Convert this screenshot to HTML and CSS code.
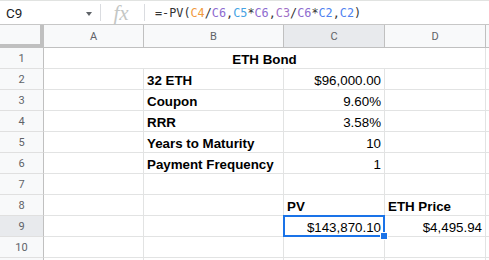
FILE: index.html
```html
<!DOCTYPE html>
<html lang="en">
<head>
    <meta charset="UTF-8">
    <meta name="viewport" content="width=device-width, initial-scale=1.0">
    <title>ETH Bond</title>
    <link rel="stylesheet" href="styles.css">
</head>
<body>
    <div class="formula-bar">
        <div class="name-box">
            <span class="cell-ref">C9</span>
            <span class="dropdown"></span>
        </div>
        <div class="sep"></div>
        <div class="fx">fx</div>
        <div class="sep"></div>
        <div class="formula">=-PV(<span class="r-orange">C4</span>/<span class="r-purple">C6</span>,<span class="r-sky">C5</span>*<span class="r-purple">C6</span>,<span class="r-violet">C3</span>/<span class="r-purple">C6</span>*<span class="r-blue">C2</span>,<span class="r-blue">C2</span>)</div>
    </div>

    <div class="sheet">
        <div class="corner"></div>
        <div class="col-head">A</div>
        <div class="col-head">B</div>
        <div class="col-head active">C</div>
        <div class="col-head">D</div>
        <div class="col-head last"></div>

        <div class="row-head">1</div>
        <div class="cell bold center span4">ETH Bond</div>
        <div class="cell last"></div>

        <div class="row-head">2</div>
        <div class="cell"></div>
        <div class="cell bold">32 ETH</div>
        <div class="cell num">$96,000.00</div>
        <div class="cell"></div>
        <div class="cell last"></div>

        <div class="row-head">3</div>
        <div class="cell"></div>
        <div class="cell bold">Coupon</div>
        <div class="cell num">9.60%</div>
        <div class="cell"></div>
        <div class="cell last"></div>

        <div class="row-head">4</div>
        <div class="cell"></div>
        <div class="cell bold">RRR</div>
        <div class="cell num">3.58%</div>
        <div class="cell"></div>
        <div class="cell last"></div>

        <div class="row-head">5</div>
        <div class="cell"></div>
        <div class="cell bold">Years to Maturity</div>
        <div class="cell num">10</div>
        <div class="cell"></div>
        <div class="cell last"></div>

        <div class="row-head">6</div>
        <div class="cell"></div>
        <div class="cell bold">Payment Frequency</div>
        <div class="cell num">1</div>
        <div class="cell"></div>
        <div class="cell last"></div>

        <div class="row-head">7</div>
        <div class="cell"></div>
        <div class="cell"></div>
        <div class="cell"></div>
        <div class="cell"></div>
        <div class="cell last"></div>

        <div class="row-head">8</div>
        <div class="cell"></div>
        <div class="cell"></div>
        <div class="cell bold">PV</div>
        <div class="cell bold">ETH Price</div>
        <div class="cell last"></div>

        <div class="row-head active">9</div>
        <div class="cell"></div>
        <div class="cell"></div>
        <div class="cell num selected">$143,870.10</div>
        <div class="cell num">$4,495.94</div>
        <div class="cell last"></div>

        <div class="row-head">10</div>
        <div class="cell"></div>
        <div class="cell"></div>
        <div class="cell"></div>
        <div class="cell"></div>
        <div class="cell last"></div>

        <div class="row-head stub"></div>
        <div class="cell stub"></div>
        <div class="cell stub"></div>
        <div class="cell stub"></div>
        <div class="cell stub"></div>
        <div class="cell stub last"></div>
    </div>
</body>
</html>
```

FILE: styles.css
```css
* {
    box-sizing: border-box;
    margin: 0;
    padding: 0;
}

body {
    background-color: #fff;
    color: #000;
    font-family: 'Liberation Sans', Arial, sans-serif;
    overflow: hidden;
}

/* formula bar */

.formula-bar {
    height: 25px;
    display: flex;
    align-items: center;
    border-top: 1px solid #e1e3e1;
    border-bottom: 1px solid #c7c7c7;
}

.name-box {
    width: 100px;
    display: flex;
    align-items: center;
    justify-content: space-between;
    padding: 0 8px 0 6px;
}

.cell-ref {
    font-family: Roboto, sans-serif;
    font-size: 13.5px;
    color: #202124;
}

.dropdown {
    width: 0;
    height: 0;
    border-left: 3px solid transparent;
    border-right: 3px solid transparent;
    border-top: 4px solid #5f6368;
    margin-top: 2px;
}

.sep {
    width: 1px;
    height: 17px;
    background-color: #dadce0;
}

.fx {
    width: 43px;
    text-align: center;
    font-family: 'Liberation Serif', serif;
    font-style: italic;
    font-size: 21px;
    color: #c4c7c5;
    line-height: 20px;
    padding-right: 3px;
}

.formula {
    padding-left: 10px;
    font-family: 'DejaVu Sans Mono', monospace;
    font-size: 11.8px;
    color: #333;
    white-space: nowrap;
}

.r-orange { color: #f09a3e; }
.r-purple { color: #8e6cd0; }
.r-sky { color: #46a3e4; }
.r-violet { color: #a06fc6; }
.r-blue { color: #4f82f0; }

/* grid */

.sheet {
    display: grid;
    grid-template-columns: 44px 100px 140px 101px 101px 1fr;
    grid-template-rows: 23px repeat(10, 21px) 2px;
}

.corner {
    background-color: #f8f9fa;
    border-right: 4px solid #c0c0c0;
    border-bottom: 4px solid #c0c0c0;
}

.col-head {
    background-color: #f8f9fa;
    border-right: 1px solid #c0c0c0;
    border-bottom: 1px solid #c0c0c0;
    display: flex;
    align-items: center;
    justify-content: center;
    font-family: Roboto, sans-serif;
    font-size: 11px;
    color: #5f6368;
}

.row-head {
    background-color: #f8f9fa;
    border-right: 1px solid #c0c0c0;
    border-bottom: 1px solid #e0e0e0;
    display: flex;
    align-items: center;
    justify-content: center;
    font-family: Roboto, sans-serif;
    font-size: 11px;
    color: #5f6368;
}

.col-head.active,
.row-head.active {
    background-color: #e8eaed;
}

.cell {
    border-right: 1px solid #e2e3e3;
    border-bottom: 1px solid #e2e3e3;
    display: flex;
    align-items: flex-end;
    padding: 0 3px 1px;
    font-size: 13.33px;
    white-space: nowrap;
}

.stub {
    border-bottom: none;
    padding: 0;
}

.cell.bold {
    font-weight: bold;
}

.cell.num {
    justify-content: flex-end;
}

.cell.center {
    justify-content: center;
}

.span4 {
    grid-column: span 4;
}

.cell.last {
    border-right: none;
}

.selected {
    position: relative;
    z-index: 1;
}

.selected::before {
    content: '';
    position: absolute;
    top: -1px;
    left: -1px;
    right: -1px;
    bottom: -1px;
    border: 2px solid #1a73e8;
}

.selected::after {
    content: '';
    position: absolute;
    right: -4px;
    bottom: -4px;
    width: 6px;
    height: 6px;
    background-color: #1a73e8;
    border: 1px solid #fff;
}
```
